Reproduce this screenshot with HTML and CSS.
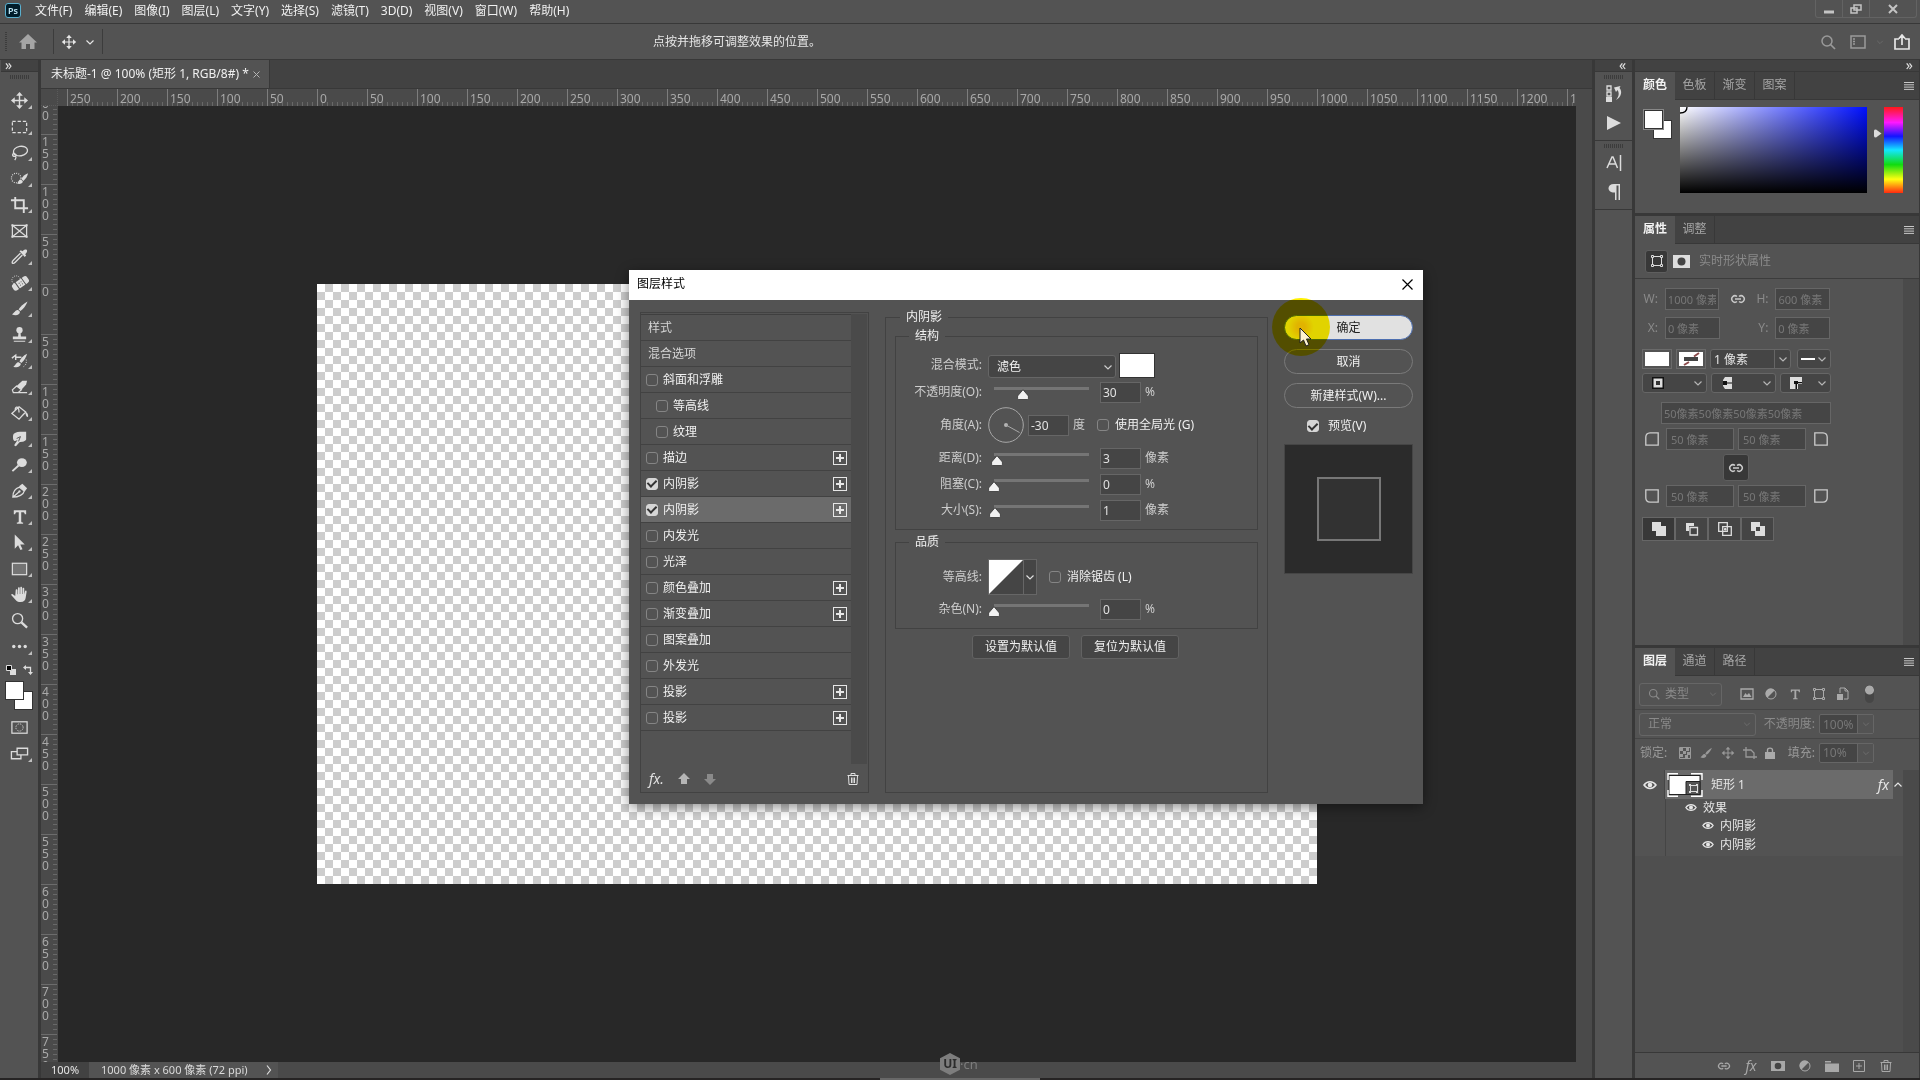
FILE: index.html
```html
<!DOCTYPE html>
<html lang="zh-CN">
<head>
<meta charset="utf-8">
<title>未标题-1 @ 100%</title>
<link rel="stylesheet" href="styles.css">
</head>
<body>
<svg class="sprite" aria-hidden="true">
  <symbol id="i-move" viewBox="0 0 20 20"><path d="M10 3v14M3 10h14" stroke="currentColor" stroke-width="1.5"/><path d="M10 1l3.500 4h-7zM10 19l3.500-4h-7zM1 10l4-3.500v7zM19 10l-4-3.500v7z" fill="currentColor"/></symbol>
  <symbol id="i-marquee" viewBox="0 0 20 20"><rect x="2.500" y="4.500" width="15" height="12" fill="none" stroke="currentColor" stroke-width="1.300" stroke-dasharray="3.500 2"/></symbol>
  <symbol id="i-lasso" viewBox="0 0 20 20"><ellipse cx="11" cy="8.500" rx="7.500" ry="5" transform="rotate(-10 11 8.500)" fill="none" stroke="currentColor" stroke-width="1.400"/><path d="M5 11c-3 0-3 3 0 3 2 0 2-2 0-2.500M6 14c1 2-.5 3-1 4" fill="none" stroke="currentColor" stroke-width="1.300"/></symbol>
  <symbol id="i-quick" viewBox="0 0 20 20"><circle cx="6.500" cy="9.500" r="5" fill="none" stroke="currentColor" stroke-width="1.300" stroke-dasharray="1 1.300"/><path d="M19 4.500c-3 1-6 3.500-7 6l2 2c2.500-2 4.500-5 5-8z" fill="currentColor"/><path d="M11.500 11c-2 0-2.500 2-4 4.500 3 .5 6 0 6-2.500z" fill="currentColor"/></symbol>
  <symbol id="i-crop" viewBox="0 0 20 20"><path d="M5.500 2v12H19M1 5.500h13.500V19" fill="none" stroke="currentColor" stroke-width="2"/></symbol>
  <symbol id="i-frame" viewBox="0 0 20 20"><path d="M2.500 4.500h15v12h-15zM2.500 4.500l15 12M17.500 4.500l-15 12" fill="none" stroke="currentColor" stroke-width="1.300"/><path d="M1.500 3.500h2v2h-2zM16.500 3.500h2v2h-2zM1.500 15.500h2v2h-2zM16.500 15.500h2v2h-2z" fill="currentColor"/></symbol>
  <symbol id="i-dropper" viewBox="0 0 20 20"><path d="M11 6.500L3.500 14c-1 1-1.500 2-1 3 1 .5 2 0 3-1L13 8.500" fill="none" stroke="currentColor" stroke-width="1.400"/><path d="M10 4.500l1.500-1 1.500 1c2-2 3.500-2.500 4.500-1.500s.5 2.500-1.500 4.500l1 1.500-1.500 1.500z" fill="currentColor"/></symbol>
  <symbol id="i-heal" viewBox="0 0 20 20"><circle cx="6.500" cy="7.500" r="4.500" fill="none" stroke="currentColor" stroke-dasharray="1 1.300"/><g transform="rotate(-35 11 11)"><rect x="1.500" y="7" width="19" height="8" rx="3" fill="currentColor"/><path d="M7 6.500v9M15 6.500v9" stroke="#535353"/><path d="M9.500 9.500h1v1h-1zM12 9.500h1v1h-1zM9.500 12h1v1h-1zM12 12h1v1h-1z" fill="#535353"/></g></symbol>
  <symbol id="i-brush" viewBox="0 0 20 20"><path d="M18.500 2.500c-4 2-8 5.500-9.500 8.500l2 1.500c3-2 6-6 7.500-10z" fill="currentColor"/><path d="M8.500 11.500c-3-.5-3.500 3-6.500 4.500 3.500 2 8.500 1 8.500-2.500z" fill="currentColor"/></symbol>
  <symbol id="i-stamp" viewBox="0 0 20 20"><circle cx="10" cy="5.500" r="3.300" fill="currentColor"/><path d="M9 8h2l.5 4H17v3H3v-3h5.500zM4 16.500h12v1.200H4z" fill="currentColor"/></symbol>
  <symbol id="i-histbrush" viewBox="0 0 20 20"><path d="M2 7.500l4-3v2h6M6 6.500v3" fill="none" stroke="currentColor" stroke-width="1.500"/><path d="M18 3c-4 2-7 5-8 8l2 1.500c3-2 5-6 6-9.500zM9.500 12c-3-.5-3 2.500-6 4.500 3.500 1.500 7.500.5 8-3z" fill="currentColor"/><path d="M17 9c1 4-1 7-4 8" fill="none" stroke="currentColor" stroke-dasharray="1 1.500"/></symbol>
  <symbol id="i-eraser" viewBox="0 0 20 20"><path d="M7 9.500L13 4h5l-1 4-5 5.500z" fill="currentColor"/><path d="M7 9.500l-4.500 4 1 3h5l3.500-3zM9 16.500h9" fill="none" stroke="currentColor" stroke-width="1.300"/></symbol>
  <symbol id="i-bucket" viewBox="0 0 20 20"><path d="M9.500 4l7 5.500-7 7.500L2 11zM5.500 7c0-4 4-4 4 3" fill="none" stroke="currentColor" stroke-width="1.400"/><path d="M16 9c2 1 3.500 3 3 5.500-1.500 1-2.500-1-3-5.500z" fill="currentColor"/></symbol>
  <symbol id="i-smudge" viewBox="0 0 20 20"><path d="M4 5c3-2.500 8-2 13-2v8c-2 3-5 2-7 3l-3.500 4c-1.500.5-2.500-1-1.500-2l3-4.500-2.500 1C3 13.500 2.500 7 4 5z" fill="currentColor"/><path d="M7 10l4-2-2 5" fill="none" stroke="#535353"/></symbol>
  <symbol id="i-dodge" viewBox="0 0 20 20"><ellipse cx="12.500" cy="8" rx="5.200" ry="4.700" fill="currentColor"/><path d="M9 11l-6.500 6" stroke="currentColor" stroke-width="2"/></symbol>
  <symbol id="i-pen" viewBox="0 0 20 20"><path d="M3 17c0-5 2-9 7-10.500l5 4C14.500 14 9 17 3 17zl7-6" fill="none" stroke="currentColor" stroke-width="1.400"/><circle cx="10" cy="11" r="1.200" fill="currentColor"/><path d="M9.500 5.500L13 3l5 4.500-2.500 3.500z" fill="currentColor"/></symbol>
  <symbol id="i-type" viewBox="0 0 20 20"><path d="M4 3.500h13v4h-1.500c-.2-1.500-.8-2-2-2h-1.700v9.500c0 1 .5 1.300 2 1.300v1.200H7.200v-1.200c1.500 0 2-.3 2-1.300V5.500H7.500c-1.200 0-1.800.5-2 2H4z" fill="currentColor"/></symbol>
  <symbol id="i-arrow" viewBox="0 0 20 20"><path d="M5 1.500v15l3.500-3.500 2.500 5 2.200-1-2.400-5H15.500z" fill="currentColor"/></symbol>
  <symbol id="i-rect" viewBox="0 0 20 20"><rect x="2.500" y="4.500" width="15" height="12" fill="#747474" stroke="currentColor" stroke-width="1.300"/></symbol>
  <symbol id="i-hand" viewBox="0 0 20 20"><path d="M5.500 11.500L2.500 9.500C1.500 9 .8 10 1.700 11l5 5.500c1 1 2 1.500 4.500 1.500 3.500 0 5-2 5.300-4.500L17.500 7c0-1.500-1.500-1.500-1.800-.2L15 10V4c0-1.500-1.800-1.500-1.800 0v5.500h-.5V3c0-1.500-1.900-1.500-1.900 0v6.500h-.5V3.500c0-1.500-1.900-1.500-1.900 0v6.300h-.5V5.500c0-1.500-1.900-1.500-1.900 0z" fill="currentColor"/></symbol>
  <symbol id="i-zoom" viewBox="0 0 20 20"><circle cx="8" cy="8" r="5.300" fill="none" stroke="currentColor" stroke-width="1.400"/><path d="M12 12l6 5.500" stroke="currentColor" stroke-width="2.500"/></symbol>
  <symbol id="i-dots" viewBox="0 0 20 20"><g fill="currentColor"><circle cx="4" cy="10" r="1.800"/><circle cx="10" cy="10" r="1.800"/><circle cx="16" cy="10" r="1.800"/></g></symbol>
  <symbol id="i-mask" viewBox="0 0 20 20"><rect x="2" y="4" width="16" height="12" fill="none" stroke="currentColor" stroke-width="1.300"/><circle cx="10" cy="10" r="3.800" fill="none" stroke="currentColor" stroke-dasharray="1 1"/></symbol>
  <symbol id="i-screen" viewBox="0 0 20 20"><path d="M7.500 4.500h11v7h-11zM7.500 8h-6v7.500h10v-4" fill="none" stroke="currentColor" stroke-width="1.400"/></symbol>
  <symbol id="i-chev" viewBox="0 0 10 10"><path d="M1.500 3.500L5 7l3.500-3.500" fill="none" stroke="currentColor" stroke-width="1.200"/></symbol>
  <symbol id="i-link" viewBox="0 0 16 12"><path d="M7 3.500A3.200 3.200 0 1 0 7 8.500M9 3.500a3.200 3.200 0 1 1 0 5M5 6h6" fill="none" stroke="currentColor" stroke-width="1.500"/></symbol>
  <symbol id="i-search" viewBox="0 0 16 16"><circle cx="7" cy="7" r="5" fill="none" stroke="currentColor" stroke-width="1.500"/><path d="M10.500 10.500L15 15" stroke="currentColor" stroke-width="1.700"/></symbol>
  <symbol id="i-shape" viewBox="0 0 14 14"><path d="M4 2.500h6M4 11.500h6M2.500 4v6M11.500 4v6" stroke="currentColor"/><path d="M1.500 1.500h2v2h-2zM10.500 1.500h2v2h-2zM1.500 10.500h2v2h-2zM10.500 10.500h2v2h-2z" fill="none" stroke="currentColor"/></symbol>
  <symbol id="i-trash" viewBox="0 0 14 14"><path d="M1.500 3.500h11M5 3V1.500h4V3M2.500 4l.5 8.500h8l.5-8.500M5.500 5.500v5.500M7 5.500v5.500M8.500 5.500v5.500" fill="none" stroke="currentColor"/></symbol>
  <symbol id="i-eye" viewBox="0 0 14 10"><path d="M1 5c3-4.500 9-4.500 12 0-3 4.500-9 4.500-12 0z" fill="none" stroke="currentColor" stroke-width="1.500"/><circle cx="7" cy="5" r="2.300" fill="currentColor"/></symbol>
  <symbol id="i-adjust" viewBox="0 0 14 14"><circle cx="7" cy="7" r="5" fill="none" stroke="currentColor"/><path d="M10.500 3.500A5 5 0 1 0 3.500 10.500z" fill="currentColor"/></symbol>
  <symbol id="i-corner" viewBox="0 0 14 14"><path d="M.8 13.200V5Q1 1 5 .8h8.200v12.400z" fill="none" stroke="currentColor" stroke-width="1.300"/></symbol>
  <symbol id="i-menu" viewBox="0 0 10 8"><path d="M0 .5h10M0 2.800h10M0 5.100h10M0 7.400h10" stroke="currentColor"/></symbol>
</svg>

<div class="app">
  <header class="menubar">
    <span class="ps">Ps</span>
    <nav class="menus">
      <a href="#">文件(F)</a><a href="#">编辑(E)</a><a href="#">图像(I)</a><a href="#">图层(L)</a><a href="#">文字(Y)</a><a href="#">选择(S)</a><a href="#">滤镜(T)</a><a href="#">3D(D)</a><a href="#">视图(V)</a><a href="#">窗口(W)</a><a href="#">帮助(H)</a>
    </nav>
    <div class="winctl">
      <button aria-label="最小化"><svg width="10" height="10"><path d="M0 8h10" stroke="currentColor" stroke-width="3"/></svg></button>
      <button aria-label="还原"><svg width="12" height="10"><path d="M4 1h7v5H4zM1 4h6v5H1z" fill="none" stroke="currentColor" stroke-width="1.500"/></svg></button>
      <button class="wide" aria-label="关闭"><svg width="10" height="10"><path d="M1 1l8 8M9 1l-8 8" stroke="currentColor" stroke-width="2"/></svg></button>
    </div>
  </header>

  <div class="options">
    <span class="vgrip"></span>
    <button class="home" aria-label="主页"><svg width="18" height="16"><path d="M9 0L0 8.500h2.500V15H7v-5h4v5h4.500V8.500H18z" fill="#a5a5a5"/></svg></button>
    <button class="current" aria-label="移动工具"><svg width="16" height="16"><use href="#i-move"/></svg><svg width="10" height="10"><use href="#i-chev"/></svg></button>
    <p class="hint">点按并拖移可调整效果的位置。</p>
    <div class="opt-right">
      <button class="dim find" aria-label="搜索"><svg width="16" height="16"><use href="#i-search"/></svg></button>
      <button class="dim" aria-label="工作区"><svg width="16" height="14"><path d="M1 1h14v12H1z" fill="none" stroke="currentColor" stroke-width="1.500"/><path d="M3 4h2M3 6.500h2M3 9h2" stroke="currentColor" stroke-width="1.500"/></svg></button>
      <button class="faint" aria-label="工作区列表"><svg width="8" height="8"><use href="#i-chev"/></svg></button>
      <button aria-label="共享"><svg width="16" height="16"><path d="M5 5H1v10h14V5h-4M8 11V2M5 4.500L8 1l3 3.500" fill="none" stroke="currentColor" stroke-width="1.700"/></svg></button>
    </div>
  </div>

  <main class="work">
    <aside class="tools">
      <div class="fold fold-left">»</div>
      <div class="hgrip"></div>
      <div class="toollist">
        <button class="tool" aria-label="移动"><svg><use href="#i-move"/></svg></button>
        <button class="tool" aria-label="选框"><svg><use href="#i-marquee"/></svg></button>
        <button class="tool" aria-label="套索"><svg><use href="#i-lasso"/></svg></button>
        <button class="tool" aria-label="快速选择"><svg><use href="#i-quick"/></svg></button>
        <button class="tool" aria-label="裁剪"><svg><use href="#i-crop"/></svg></button>
        <button class="tool flat" aria-label="图框"><svg><use href="#i-frame"/></svg></button>
        <button class="tool" aria-label="吸管"><svg><use href="#i-dropper"/></svg></button>
        <button class="tool" aria-label="修复画笔"><svg><use href="#i-heal"/></svg></button>
        <button class="tool" aria-label="画笔"><svg><use href="#i-brush"/></svg></button>
        <button class="tool" aria-label="图章"><svg><use href="#i-stamp"/></svg></button>
        <button class="tool" aria-label="历史画笔"><svg><use href="#i-histbrush"/></svg></button>
        <button class="tool" aria-label="橡皮擦"><svg><use href="#i-eraser"/></svg></button>
        <button class="tool" aria-label="油漆桶"><svg><use href="#i-bucket"/></svg></button>
        <button class="tool" aria-label="涂抹"><svg><use href="#i-smudge"/></svg></button>
        <button class="tool" aria-label="减淡"><svg><use href="#i-dodge"/></svg></button>
        <button class="tool" aria-label="钢笔"><svg><use href="#i-pen"/></svg></button>
        <button class="tool" aria-label="文字"><svg><use href="#i-type"/></svg></button>
        <button class="tool" aria-label="路径选择"><svg><use href="#i-arrow"/></svg></button>
        <button class="tool" aria-label="矩形"><svg><use href="#i-rect"/></svg></button>
        <button class="tool" aria-label="抓手"><svg><use href="#i-hand"/></svg></button>
        <button class="tool flat" aria-label="缩放"><svg><use href="#i-zoom"/></svg></button>
        <button class="tool" aria-label="更多"><svg><use href="#i-dots"/></svg></button>
      </div>
      <div class="mini">
        <svg width="10" height="10"><path d="M4 4h6v6H4z" fill="#ddd"/><path d="M.5.500h5v5h-5z" fill="#000" stroke="#ddd"/></svg>
        <svg width="10" height="10"><path d="M2 2.500h5.500V8" fill="none" stroke="#ddd" stroke-width="1.300"/><path d="M0 2.500L3 0v5zM7.500 10L5 7h5z" fill="#ddd"/></svg>
      </div>
      <div class="swatches"><i class="sw back"></i><i class="sw front"></i></div>
      <button class="tool flat" aria-label="快速蒙版"><svg><use href="#i-mask"/></svg></button>
      <button class="tool" aria-label="屏幕模式"><svg><use href="#i-screen"/></svg></button>
    </aside>

    <section class="doc">
      <div class="tabs">
        <div class="doctab"><span>未标题-1 @ 100% (矩形 1, RGB/8#) *</span><button aria-label="关闭文档"><svg width="7" height="7"><path d="M.5.500l6 6M6.500.500l-6 6" stroke="#b5b5b5"/></svg></button></div>
      </div>
      <div class="view">
        <div class="corner"></div>
        <div class="hruler"><span>250</span><span>200</span><span>150</span><span>100</span><span>50</span><span>0</span><span>50</span><span>100</span><span>150</span><span>200</span><span>250</span><span>300</span><span>350</span><span>400</span><span>450</span><span>500</span><span>550</span><span>600</span><span>650</span><span>700</span><span>750</span><span>800</span><span>850</span><span>900</span><span>950</span><span>1000</span><span>1050</span><span>1100</span><span>1150</span><span>1200</span><span>1250</span></div>
        <div class="vscroll"></div>
        <div class="vruler"><span>200</span><span>150</span><span>100</span><span>50</span><span>0</span><span>50</span><span>100</span><span>150</span><span>200</span><span>250</span><span>300</span><span>350</span><span>400</span><span>450</span><span>500</span><span>550</span><span>600</span><span>650</span><span>700</span><span>750</span></div>
        <div class="stage"><div class="artboard"></div></div>
      </div>
      <footer class="status"><span class="zoomval">100%</span><span class="info"><span>1000 像素 x 600 像素 (72 ppi)</span><svg width="6" height="10"><path d="M1 .5l3.500 4.500L1 9.500" fill="none" stroke="#ddd" stroke-width="1.200"/></svg></span></footer>
      <div class="watermark"><span class="hex">UI</span><span>·cn</span></div>
    </section>

    <aside class="strip">
      <div class="fold">«</div>
      <div class="stripgroup">
        <div class="hgrip"></div>
        <button aria-label="历史记录"><svg width="16" height="18"><path d="M1 1h4v4H1zM1 7h4v4H1z" fill="none" stroke="currentColor" stroke-width="1.300"/><path d="M0 12h6v5H0z" fill="currentColor"/><path d="M8 2.500L14.500 1 13.500 3C17 7 14.500 13 10 15c3-3.500 3.500-7 1.500-10L10 7z" fill="currentColor"/></svg></button>
        <button aria-label="动作"><svg width="14" height="14"><path d="M0 0l14 7-14 7z" fill="currentColor"/></svg></button>
      </div>
      <div class="stripgroup">
        <div class="hgrip"></div>
        <button aria-label="字符"><svg width="16" height="18"><path d="M1 14L6 3h1l4.500 11M3 10h6.500M14.500 1v16" fill="none" stroke="currentColor" stroke-width="1.500"/></svg></button>
        <button aria-label="段落"><svg width="12" height="16"><path d="M6 0h6v16h-1.500V1.500H8.500V16H7V8.500C-1.500 9-1.500 0 6 0z" fill="currentColor"/></svg></button>
      </div>
    </aside>

    <aside class="panels">
      <div class="fold fold-right">»</div>
      <section class="panel">
        <div class="ptabs"><button class="on">颜色</button><button>色板</button><button>渐变</button><button>图案</button><svg class="burger" width="10" height="8"><use href="#i-menu"/></svg></div>
        <div class="colorbody">
          <div class="swatches big"><i class="sw back"></i><i class="sw front"></i></div>
          <div class="field"><svg width="8" height="8"><path d="M7 0c0 4-3 6-7 6" fill="none" stroke="#000" stroke-width="1.300"/></svg></div>
          <svg class="pointer" width="8" height="9"><path d="M0 1.500Q0 .5 2 .5L7.500 4.500 2 8.500Q0 8.500 0 7z" fill="#ddd"/></svg>
          <div class="hue"></div>
        </div>
      </section>
      <section class="panel props">
        <div class="ptabs"><button class="on">属性</button><button>调整</button><svg class="burger" width="10" height="8"><use href="#i-menu"/></svg></div>
        <div class="propshead"><span class="boxicon"><svg width="14" height="14"><use href="#i-shape"/></svg></span><svg width="17" height="13"><path d="M0 0h17v13H0z" fill="#ddd"/><circle cx="8.500" cy="6.500" r="4" fill="#444"/></svg><span>实时形状属性</span></div>
        <div class="propsbody">
          <div class="propform">
            <div class="prow size"><label for="pw">W:</label><input id="pw" value="1000 像素" disabled><svg class="lk" width="16" height="12"><use href="#i-link"/></svg><label for="ph">H:</label><input id="ph" value="600 像素" disabled></div>
            <div class="prow size"><label for="px">X:</label><input id="px" value="0 像素" disabled><span class="lk"></span><label for="py">Y:</label><input id="py" value="0 像素" disabled></div>
            <div class="prow strokes">
              <button class="fillbtn" aria-label="填充"><i></i></button>
              <button class="fillbtn" aria-label="描边"><i><svg width="24" height="14"><path d="M5 5h14v4H5z" fill="#444"/><path d="M15 4.500L20 1M5 13l5-3" stroke="#8b4a4a" stroke-width="2"/></svg></i></button>
              <span class="combo w81"><input aria-label="描边宽度" value="1 像素"><button aria-label="宽度列表"><svg width="10" height="10"><use href="#i-chev"/></svg></button></span>
              <button class="drop w34" aria-label="线型"><svg width="14" height="10"><path d="M0 5h14" stroke="#fff" stroke-width="2"/></svg><svg width="10" height="10"><use href="#i-chev"/></svg></button>
            </div>
            <div class="prow aligns">
              <button class="drop w64" aria-label="对齐"><svg width="14" height="14"><path d="M1 1h12v12H1z" fill="#111"/><path d="M2.500 2.500h9v9h-9z" fill="#ddd"/><path d="M5 5h4v4H5z" fill="#333"/></svg><svg width="10" height="10"><use href="#i-chev"/></svg></button>
              <button class="drop w64" aria-label="端点"><svg width="14" height="14"><path d="M5 1h7v12H5L3 10V4z" fill="#ddd"/><path d="M3 5h4v4H3zM6 6.500h6v1H6z" fill="#111"/></svg><svg width="10" height="10"><use href="#i-chev"/></svg></button>
              <button class="drop w51" aria-label="角点"><svg width="14" height="14"><path d="M1 1h12v7H9v5H1z" fill="#ddd"/><path d="M5 5h4v3H5zM6.500 8h1.500v5H6.500zM8 6h5v1.200H8z" fill="#111"/></svg><svg width="10" height="10"><use href="#i-chev"/></svg></button>
            </div>
            <div class="prow radiiall"><input aria-label="圆角" value="50像素50像素50像素50像素" disabled></div>
            <div class="prow radii"><svg width="14" height="14"><use href="#i-corner"/></svg><input aria-label="左上" value="50 像素" disabled><input aria-label="右上" value="50 像素" disabled><svg class="tr" width="14" height="14"><use href="#i-corner"/></svg></div>
            <div class="prow linkrow"><button class="linkbtn" aria-label="链接圆角"><svg width="16" height="12"><use href="#i-link"/></svg></button></div>
            <div class="prow radii"><svg class="bl" width="14" height="14"><use href="#i-corner"/></svg><input aria-label="左下" value="50 像素" disabled><input aria-label="右下" value="50 像素" disabled><svg class="br" width="14" height="14"><use href="#i-corner"/></svg></div>
            <div class="prow ops">
              <button class="on" aria-label="合并"><svg width="14" height="14"><path d="M0 0h9v4h5v10H4V9H0z" fill="#ddd"/></svg></button>
              <button aria-label="减去"><svg width="14" height="14"><path d="M1 1h8v3H4v5H1z" fill="#ddd"/><path d="M5 5.500h7.500V13H5z" fill="none" stroke="#ddd" stroke-width="1.300"/></svg></button>
              <button aria-label="相交"><svg width="14" height="14"><path d="M.7.700h8.600v8.600H.7zM4.700 4.700h8.600v8.600H4.700z" fill="none" stroke="#ddd" stroke-width="1.300"/><path d="M6.500 6.500h1.500v1.500H6.500z" fill="#ddd" stroke="#ddd"/></svg></button>
              <button aria-label="排除"><svg width="14" height="14"><path d="M0 0h9v4h5v10H4V9H0z" fill="#ddd"/><path d="M5 5h4v4H5z" fill="#444"/></svg></button>
            </div>
          </div>
          <div class="track"></div>
        </div>
      </section>
      <section class="panel layers">
        <div class="ptabs"><button class="on">图层</button><button>通道</button><button>路径</button><svg class="burger" width="10" height="8"><use href="#i-menu"/></svg></div>
        <div class="lrow filter">
          <button class="ldrop kind"><svg width="12" height="12"><use href="#i-search"/></svg><span>类型</span><svg class="end" width="8" height="8"><use href="#i-chev"/></svg></button>
          <svg width="14" height="12"><path d="M1 1h12v10H1z" fill="none" stroke="currentColor" stroke-width="1.300"/><path d="M3 9l2.500-4L7 7l2-2 2.500 4z" fill="currentColor"/></svg>
          <svg width="14" height="14"><use href="#i-adjust"/></svg>
          <svg width="14" height="14"><use href="#i-type"/></svg>
          <svg width="14" height="14"><use href="#i-shape"/></svg>
          <svg width="14" height="14"><path d="M4 6V1h5l3 3v8H8M9 1v3h3" fill="none" stroke="currentColor"/><path d="M1 7h6v6H1z" fill="currentColor"/></svg>
          <i class="toggle"></i>
        </div>
        <div class="lrow">
          <button class="ldrop mode"><span>正常</span><svg class="end" width="8" height="8"><use href="#i-chev"/></svg></button>
          <label class="push" for="lop">不透明度:</label>
          <span class="combo off"><input id="lop" value="100%" disabled><button aria-label="不透明度列表"><svg width="8" height="8"><use href="#i-chev"/></svg></button></span>
        </div>
        <div class="lrow locks">
          <span>锁定:</span>
          <svg width="12" height="12"><path d="M.5.500h11v11H.5z" fill="none" stroke="#999"/><path d="M1 1h3v3H1zM7 1h3v3H7zM4 4h3v3H4zM8 5h3v3H8zM1 7h3v3H1zM6 8h3v3H6z" fill="#999"/></svg>
          <svg width="14" height="14"><use href="#i-brush"/></svg>
          <svg width="14" height="14"><use href="#i-move"/></svg>
          <svg width="14" height="12"><path d="M3 0v10h11M0 3h8l3 3v6" fill="none" stroke="#999" stroke-width="1.300"/></svg>
          <svg width="10" height="12"><path d="M0 5h10v7H0z" fill="#aaa"/><path d="M2.500 5V3c0-2.500 5-2.500 5 0v2" fill="none" stroke="#aaa" stroke-width="1.400"/></svg>
          <label class="push" for="lfi">填充:</label>
          <span class="combo off"><input id="lfi" value="10%" disabled><button aria-label="填充列表"><svg width="8" height="8"><use href="#i-chev"/></svg></button></span>
        </div>
        <div class="layerarea">
          <div class="layerlist">
            <div class="layer">
              <span class="eyecol"><svg width="14" height="10"><use href="#i-eye"/></svg></span>
              <div class="layersel">
                <svg width="36" height="24"><path d="M2 2.500h31v19H2z" fill="#fff" stroke="#222"/><path d="M19 8.500h14v13H19z" fill="#555" stroke="#222"/><path d="M23.500 12.500h7v6h-7z" fill="none" stroke="#ddd"/><path d="M22 11h2v2h-2zM29 11h2v2h-2zM22 18h2v2h-2zM29 18h2v2h-2z" fill="#ddd"/><path d="M1 7V.7h10M24 .7h11V7M1 17v6.300h10M24 23.300h11V17" fill="none" stroke="#fff" stroke-width="1.400"/></svg>
                <span class="lname">矩形 1</span><span class="fx">fx</span>
              </div>
              <svg class="caret" width="10" height="10"><use href="#i-chev"/></svg>
            </div>
            <div class="effects">
              <div class="eff"><svg width="12" height="9"><use href="#i-eye"/></svg>效果</div>
              <div class="eff sub"><svg width="12" height="9"><use href="#i-eye"/></svg>内阴影</div>
              <div class="eff sub"><svg width="12" height="9"><use href="#i-eye"/></svg>内阴影</div>
            </div>
          </div>
          <div class="track"></div>
        </div>
        <div class="lfoot">
          <button aria-label="链接图层"><svg width="14" height="12"><use href="#i-link"/></svg></button>
          <button class="fx" aria-label="图层样式">fx</button>
          <button aria-label="添加蒙版"><svg width="14" height="12"><path d="M0 1h14v10H0z" fill="currentColor"/><circle cx="7" cy="6" r="3.300" fill="#444"/></svg></button>
          <button aria-label="调整图层"><svg width="14" height="14"><use href="#i-adjust"/></svg></button>
          <button aria-label="新建组"><svg width="14" height="12"><path d="M0 1h6v1.500H0zM0 3.500h14V12H0z" fill="currentColor"/></svg></button>
          <button aria-label="新建图层"><svg width="12" height="12"><path d="M.5.500h11v11H.5zM6 3v6M3 6h6" fill="none" stroke="currentColor"/></svg></button>
          <button aria-label="删除图层"><svg width="14" height="14"><use href="#i-trash"/></svg></button>
        </div>
      </section>
    </aside>
  </main>
  <div class="edge"><i></i></div>
</div>

<div class="dialog" role="dialog" aria-labelledby="dt">
  <div class="dtitle"><h1 id="dt">图层样式</h1><button aria-label="关闭"><svg width="11" height="11"><path d="M.5.500l10 10M10.500.500l-10 10" stroke="#000" stroke-width="1.200"/></svg></button></div>
  <div class="dbody">
    <div class="styles">
      <div class="stylescroll">
        <div class="stylelist">
          <div class="st head">样式</div>
          <div class="st head">混合选项</div>
          <div class="st"><label><input type="checkbox">斜面和浮雕</label></div>
          <div class="st indent"><label><input type="checkbox">等高线</label></div>
          <div class="st indent"><label><input type="checkbox">纹理</label></div>
          <div class="st"><label><input type="checkbox">描边</label><button class="plus" aria-label="添加描边"></button></div>
          <div class="st"><label><input type="checkbox" checked>内阴影</label><button class="plus" aria-label="添加内阴影"></button></div>
          <div class="st sel"><label><input type="checkbox" checked>内阴影</label><button class="plus" aria-label="添加内阴影"></button></div>
          <div class="st"><label><input type="checkbox">内发光</label></div>
          <div class="st"><label><input type="checkbox">光泽</label></div>
          <div class="st"><label><input type="checkbox">颜色叠加</label><button class="plus" aria-label="添加颜色叠加"></button></div>
          <div class="st"><label><input type="checkbox">渐变叠加</label><button class="plus" aria-label="添加渐变叠加"></button></div>
          <div class="st"><label><input type="checkbox">图案叠加</label></div>
          <div class="st"><label><input type="checkbox">外发光</label></div>
          <div class="st"><label><input type="checkbox">投影</label><button class="plus" aria-label="添加投影"></button></div>
          <div class="st"><label><input type="checkbox">投影</label><button class="plus" aria-label="添加投影"></button></div>
        </div>
        <div class="track"></div>
      </div>
      <div class="stylefoot">
        <button class="fx" aria-label="效果菜单">fx.</button>
        <button aria-label="上移"><svg width="12" height="12"><path d="M6 0l6 6H9v5H3V6H0z" fill="#b5b5b5"/></svg></button>
        <button aria-label="下移"><svg width="12" height="12"><path d="M6 12L0 6h3V1h6v5h3z" fill="#8a8a8a"/></svg></button>
        <button class="end" aria-label="删除"><svg width="14" height="14"><use href="#i-trash"/></svg></button>
      </div>
    </div>

    <fieldset class="main">
      <legend>内阴影</legend>
      <fieldset class="inner structure">
        <legend>结构</legend>
        <div class="row first"><label for="bm">混合模式:</label><span class="selwrap"><select id="bm"><option>滤色</option></select><svg width="10" height="10"><use href="#i-chev"/></svg></span><button class="colorchip" aria-label="阴影颜色"></button></div>
        <div class="row"><label for="op">不透明度(O):</label><input type="range" value="30" aria-label="不透明度"><input type="text" id="op" value="30"><span>%</span></div>
        <div class="row angle"><label for="an">角度(A):</label><svg width="36" height="36"><circle cx="18" cy="18" r="17.300" fill="none" stroke="#a8a8a8"/><circle cx="18" cy="18" r="2" fill="#b5b5b5"/><path d="M18 18l13.500 7.500" stroke="#a8a8a8"/></svg><input type="text" id="an" value="-30"><span>度</span><label class="check"><input type="checkbox">使用全局光 (G)</label></div>
        <div class="row"><label for="di">距离(D):</label><input type="range" value="3" aria-label="距离"><input type="text" id="di" value="3"><span>像素</span></div>
        <div class="row"><label for="ch">阻塞(C):</label><input type="range" value="0" aria-label="阻塞"><input type="text" id="ch" value="0"><span>%</span></div>
        <div class="row"><label for="si">大小(S):</label><input type="range" value="1" aria-label="大小"><input type="text" id="si" value="1"><span>像素</span></div>
      </fieldset>
      <fieldset class="inner quality">
        <legend>品质</legend>
        <div class="row contour"><label for="ct">等高线:</label><button class="curve" id="ct"><svg width="34" height="34"><path d="M0 0h34L0 34z" fill="#fff"/></svg><span><svg width="10" height="10"><use href="#i-chev"/></svg></span></button><label class="check"><input type="checkbox">消除锯齿 (L)</label></div>
        <div class="row"><label for="no">杂色(N):</label><input type="range" value="0" aria-label="杂色"><input type="text" id="no" value="0"><span>%</span></div>
      </fieldset>
      <div class="defaults"><button>设置为默认值</button><button>复位为默认值</button></div>
    </fieldset>

    <div class="actions">
      <button class="pill ok">确定</button>
      <button class="pill">取消</button>
      <button class="pill">新建样式(W)...</button>
      <label class="preview"><input type="checkbox" checked>预览(V)</label>
      <div class="thumb"><i></i></div>
    </div>
  </div>
  <div class="halo"></div>
  <svg class="cursor" width="14" height="20"><path d="M1 1v15l3.500-3 2.500 6 3-1.300L7.500 12H12z" fill="#fff3d0" stroke="#222"/></svg>
</div>
</body>
</html>
```
FILE: styles.css
```css
* { box-sizing: border-box; }
html, body { height: 100%; }
body {
  margin: 0;
  background: #535353;
  color: #e6e6e6;
  font: 12px/16px "Noto Sans", "Noto Sans CJK SC", sans-serif;
  overflow: hidden;
}
button, input, select { font: inherit; color: inherit; margin: 0; }
button { background: none; border: 0; padding: 0; display: inline-flex; align-items: center; justify-content: center; }
svg { display: block; flex: none; }
a { color: inherit; text-decoration: none; }
i { display: block; }
.sprite { position: absolute; width: 0; height: 0; }

.app { display: flex; flex-direction: column; height: 100vh; min-width: 1200px; }

/* menu bar */
.menubar { display: flex; height: 24px; border-bottom: 1px solid #383838; align-items: flex-start; flex: none; }
.ps { width: 16px; height: 15px; margin: 3px 14px 0 5px; border: 1px solid #5bb0cf; border-radius: 3px; background: #001d2b; color: #bfe6f5; font-size: 9px; line-height: 13px; font-weight: 600; text-align: center; }
.menus { display: flex; gap: 12px; line-height: 20px; padding-top: 1px; color: #f0f0f0; }
.winctl { display: flex; margin-left: auto; margin-right: 3px; height: 18px; border: 1px solid #636363; border-top: 0; border-radius: 0 0 3px 3px; color: #c4c4c4; }
.winctl button { width: 27px; border-right: 1px solid #636363; }
.winctl .wide { width: 46px; border-right: 0; }

/* options bar */
.options { display: flex; align-items: center; height: 36px; border-bottom: 1px solid #383838; padding: 0 10px 0 5px; flex: none; }
.vgrip { width: 2px; height: 20px; background: repeating-linear-gradient(#3c3c3c 0 1px, transparent 1px 2px); }
.home { width: 47px; height: 25px; border-right: 1px solid #3c3c3c; padding-right: 4px; }
.current { width: 49px; height: 25px; border-right: 1px solid #3c3c3c; gap: 8px; }
.hint { margin: 0 0 0 550px; }
.opt-right { display: flex; align-items: center; margin-left: auto; gap: 10px; }
.dim { color: #9a9a9a; }
.find { margin-right: 4px; }
.faint { color: #6a6a6a; }

/* work area */
.work { display: flex; flex: 1; min-height: 0; background: #383838; gap: 3px; }
.fold { height: 12px; background: #424242; border-bottom: 1px solid #383838; font-size: 14px; line-height: 9px; color: #e0e0e0; text-align: center; padding: 0 6px; flex: none; }
.strip .fold { padding-left: 24px; }
.fold-left { text-align: left; padding-left: 4px; }
.fold-right { text-align: right; }
.hgrip { width: 20px; height: 4px; margin: 3px auto 0; background: repeating-linear-gradient(90deg, #3c3c3c 0 1px, transparent 1px 2px); }

.tools { width: 38px; padding-left: 1px; background: #535353; flex: none; display: flex; flex-direction: column; align-items: center; color: #dcdcdc; }
.tools .fold { align-self: stretch; }
.toollist { display: flex; flex-direction: column; margin-top: 8px; }
.tool { position: relative; width: 37px; height: 26px; }
.tool svg { width: 19px; height: 19px; }
.tool::after { content: ""; position: absolute; right: 6px; bottom: 4px; border: 2px solid; border-color: transparent #c0c0c0 #c0c0c0 transparent; }
.tool.flat::after { display: none; }
.mini { display: flex; justify-content: space-between; width: 27px; margin: 6px 0; }
.swatches { position: relative; width: 28px; height: 29px; margin: 0 0 4px; flex: none; }
.tools .swatches { margin-right: 2px; }
.sw { position: absolute; width: 19px; height: 19px; background: #fff; border: 1px solid #333; }
.sw.front { left: 0; top: 0; }
.sw.back { right: 0; bottom: 0; }

.doc { position: relative; flex: 1; min-width: 0; display: flex; flex-direction: column; background: #424242; }
.tabs { height: 29px; border-bottom: 1px solid #383838; display: flex; flex: none; }
.doctab { background: #535353; display: flex; align-items: center; gap: 4px; padding: 0 9px 0 10px; border-right: 1px solid #383838; color: #f0f0f0; }
.view { flex: 1; min-height: 0; display: grid; grid-template-columns: 17px minmax(0, 1fr) 16px; grid-template-rows: 17px minmax(0, 1fr); }
.corner { background: #4a4a4a; border: 1px dotted #5a5a5a; border-width: 0 1px 1px 0; }
.hruler, .vruler { display: flex; overflow: hidden; background: #4a4a4a; color: #a9a9a9; }
.hruler { padding-left: 9px; }
.hruler span { flex: 0 0 50px; padding-left: 2px; line-height: 19px; border-left: 1px solid #7d7d7d; background: repeating-linear-gradient(90deg, transparent 0 4px, #686868 4px 5px) 0 100% / 100% 4px no-repeat; }
.vruler { flex-direction: column; padding-right: 1px; justify-content: flex-start; }
.vruler span { flex: 0 0 50px; padding: 1px 8px 0 1px; line-height: 12px; overflow-wrap: anywhere; border-top: 1px solid #6c6c6c; background: repeating-linear-gradient(transparent 0 4px, #686868 4px 5px) 100% 0 / 4px 100% no-repeat; }
.vruler span:first-child { margin-top: -22px; }
.vscroll { grid-row: 1 / 3; grid-column: 3; background: #4a4a4a; }
.stage { position: relative; background: #282828; overflow: hidden; }
.artboard { position: absolute; left: 259px; top: 178px; width: 1000px; height: 600px; background: conic-gradient(#cdcdcd 25%, #fff 0 50%, #cdcdcd 0 75%, #fff 0) 0 0 / 16px 16px; }
.status { height: 16px; flex: none; display: flex; background: #4a4a4a; font-size: 11px; }
.zoomval { width: 48px; padding-left: 10px; background: #424242; }
.info { display: flex; gap: 18px; align-items: center; padding: 0 6px 0 12px; background: #535353; color: #dadada; }
.watermark { position: absolute; left: 899px; bottom: 3px; display: flex; align-items: center; color: #7d7d7d; font-size: 13px; }
.hex { width: 20px; height: 22px; background: #7d7d7d; color: #2c2c2c; font-size: 12px; font-weight: 700; line-height: 22px; text-align: center; clip-path: polygon(50% 0, 100% 24%, 100% 76%, 50% 100%, 0 76%, 0 24%); }

.strip { width: 37px; background: #535353; flex: none; color: #dcdcdc; }
.stripgroup { height: 69px; border-bottom: 1px solid #383838; display: flex; flex-direction: column; align-items: center; }
.stripgroup button { width: 37px; height: 29px; }

.panels { width: 285px; flex: none; display: flex; flex-direction: column; border-right: 1px solid #383838; }
.panel { background: #535353; margin-bottom: 3px; flex: none; }
.ptabs { display: flex; height: 28px; background: #424242; border-bottom: 1px solid #383838; align-items: stretch; flex: none; }
.ptabs button { width: 40px; color: #a5a5a5; border-right: 1px solid #383838; padding-bottom: 2px; }
.ptabs .on { background: #535353; color: #f2f2f2; font-weight: 600; height: 28px; border: 0; }
.burger { margin: 10px 5px 0 auto; color: #c8c8c8; }

.colorbody { display: flex; padding: 7px 16px 20px 9px; height: 113px; align-items: flex-start; }
.swatches.big { margin: 3px 8px 0 0; }
.big .front { outline: 1px solid #888; }
.field { flex: 1; height: 86px; background: linear-gradient(transparent, #000), linear-gradient(90deg, #fff, #0010ff); }
.pointer { margin: 22px 2px 0 7px; }
.hue { width: 19px; height: 86px; background: linear-gradient(#ff1818, #ff18ff 18%, #1414ff 34%, #14e6ff 50%, #10dc10 67%, #ffff10 84%, #ff2a10); }

.props { height: 429px; display: flex; flex-direction: column; }
.propshead { display: flex; align-items: center; height: 35px; padding: 0 10px; border-bottom: 1px solid #3c3c3c; gap: 5px; color: #8a8a8a; flex: none; }
.propshead span:last-child { padding-left: 4px; }
.boxicon { width: 23px; height: 23px; background: #383838; border: 1px solid #5e5e5e; border-radius: 3px; display: grid; place-items: center; color: #ddd; }
.propsbody { flex: 1; display: flex; }
.propform { flex: 1; padding: 9px 7px 0; }
.track { width: 16px; background: #4a4a4a; flex: none; }
.prow { display: flex; align-items: center; }
.prow input { min-width: 0; height: 22px; background: #454545; border: 1px solid #666; padding: 0 2px; font-size: 11px; }
.prow input:disabled { color: #777; }
.size { width: 188px; margin-bottom: 7px; }
.size label { width: 16px; text-align: right; color: #8a8a8a; }
.size input { width: 55px; margin-left: 7px; }
.size .lk { width: 16px; margin: 0 10px 0 11px; color: #c8c8c8; }
.size .lk + label { width: 12px; }
.strokes, .aligns { gap: 4px; height: 20px; margin: 4px 0; }
.strokes { margin-top: 10px; }
.fillbtn { width: 30px; height: 20px; border: 1px solid #6a6a6a; }
.fillbtn i { width: 24px; height: 14px; background: #fff; }
.combo { display: flex; height: 20px; border: 1px solid #666; border-radius: 3px; background: #454545; }
.combo input { flex: 1; min-width: 0; width: 100%; height: 18px; border: 0; background: none; padding: 0 3px; }
.combo button { width: 16px; border-left: 1px solid #666; color: #b5b5b5; flex: none; }
.prow .combo input { height: 18px; border: 0; font-size: 12px; background: none; }
.w81 { width: 81px; }
.drop { height: 20px; border: 1px solid #666; border-radius: 3px; background: #454545; justify-content: space-between; padding: 0 3px 0 8px; color: #b5b5b5; }
.drop.w34 { width: 34px; margin-left: 2px; padding-left: 3px; }
.w64 { width: 65px; }
.w51 { width: 51px; }
.radiiall { padding-left: 19px; margin-top: 9px; }
.radiiall input { width: 170px; }
.radii { gap: 4px; margin: 4px 0; padding-left: 3px; color: #ccc; }
.radii input { width: 68px; padding-left: 4px; }
.radii svg:first-child { margin-right: 3px; }
.radii svg:last-child { margin-left: 4px; }
.tr { transform: scaleX(-1); }
.bl { transform: scaleY(-1); }
.br { transform: scale(-1); }
.linkrow { padding-left: 81px; }
.linkbtn { width: 26px; height: 27px; background: #383838; border: 1px solid #5e5e5e; border-radius: 3px; color: #ccc; }
.ops { margin-top: 10px; }
.ops button { width: 33px; height: 24px; background: #454545; border: 1px solid #666; }
.ops .on { background: #383838; }

.layers { flex: 1; margin: 0; display: flex; flex-direction: column; min-height: 0; }
.lrow { display: flex; align-items: center; height: 29px; padding: 0 45px 0 4px; border-bottom: 1px solid #454545; color: #8a8a8a; flex: none; }
.filter { height: 34px; gap: 10px; color: #aaa; padding-top: 3px; }
.ldrop { height: 23px; border: 1px solid #666; border-radius: 3px; gap: 5px; justify-content: flex-start; padding: 0 4px 0 8px; color: #8a8a8a; }
.ldrop .end { margin-left: auto; color: #6e6e6e; }
.kind { width: 86px; margin-right: 8px; }
.mode { width: 117px; }
.toggle { width: 9px; height: 18px; border-radius: 5px; background: radial-gradient(circle at 50% 5px, #aaa 4px, #464646 5px); margin-left: 5px; }
.push { margin-left: auto; margin-right: 4px; }
.off { width: 55px; border-radius: 2px; }
.off input { color: #777; }
.off button { background: #535353; color: #6e6e6e; }
.locks { gap: 8px; padding: 0 45px 4px 5px; border-bottom: 0; color: #999; height: 31px; }
.locks span:first-child { margin-right: 4px; }
.locks .push { margin-right: -4px; }
.layerarea { flex: 1; display: flex; min-height: 0; background: #4f4f4f; }
.layerlist { flex: 1; }
.layer { display: flex; align-items: center; background: #535353; }
.eyecol { width: 30px; height: 29px; display: grid; place-items: center; border-right: 1px solid #454545; }
.layersel { flex: 1; display: flex; align-items: center; height: 29px; background: #6b6b6b; padding: 0 4px 0 2px; }
.lname { margin-left: 8px; }
.fx { font: italic 14px/14px "Noto Sans", sans-serif; }
.layersel .fx { margin-left: auto; }
.caret { transform: scaleY(-1); }
.effects { background: #535353; padding: 0 0 2px 50px; box-shadow: inset 30px 0 0 #535353, inset 31px 0 0 #454545; }
.eff { display: flex; align-items: center; height: 17px; gap: 6px; }
.eff.sub { padding-left: 17px; height: 19px; }
.lfoot { display: flex; align-items: center; justify-content: flex-end; gap: 13px; height: 26px; border-top: 1px solid #383838; padding-right: 26px; color: #a8a8a8; flex: none; }
.lfoot button { width: 14px; }
.edge { height: 2px; background: #262424; flex: none; }
.edge i { width: 160px; height: 2px; margin: 0 auto; background: #686868; }

/* layer style dialog */
.dialog { position: absolute; left: 629px; top: 270px; width: 794px; background: #535353; box-shadow: 0 3px 12px rgba(0, 0, 0, .45); color: #e0e0e0; }
.dtitle { height: 30px; background: #fff; color: #000; display: flex; align-items: center; justify-content: space-between; padding: 0 10px 2px 8px; }
.dtitle h1 { margin: 0; font: inherit; }
.dbody { display: grid; grid-template-columns: 229px 383px 129px; column-gap: 16px; padding: 10px 10px 11px 11px; }
.styles { margin-top: 2px; height: 481px; border: 1px solid #424242; padding-top: 1px; display: flex; flex-direction: column; }
.stylescroll { display: flex; height: 450px; padding-right: 1px; }
.stylelist { flex: 1; border-top: 1px solid #3f3f3f; }
.st { height: 26px; border-bottom: 1px solid #424242; display: flex; align-items: center; justify-content: space-between; padding: 0 4px 0 5px; color: #f0f0f0; }
.st.head { padding-left: 7px; color: #d5d5d5; }
.st.indent { padding-left: 15px; }
.st.sel { background: #6b6b6b; }
.st label { display: flex; align-items: center; gap: 5px; }
.plus { width: 14px; height: 14px; border: 1px solid #e6e6e6; background: linear-gradient(#e6e6e6, #e6e6e6) center / 8px 2px no-repeat, linear-gradient(#e6e6e6, #e6e6e6) center / 2px 8px no-repeat; }
.stylefoot { flex: 1; display: flex; align-items: center; gap: 14px; padding: 2px 8px 0; }
.stylefoot .end { margin-left: auto; }

input[type="checkbox"] { appearance: none; width: 12px; height: 12px; border: 1px solid #858585; border-radius: 3px; flex: none; display: grid; place-items: center; }
input[type="checkbox"]:checked { background: #d6d6d6; border-color: #d6d6d6; }
input[type="checkbox"]:checked::before { content: ""; width: 4px; height: 7px; margin-top: -2px; border: solid #333; border-width: 0 2px 2px 0; transform: rotate(45deg); }

fieldset { margin: 0; min-width: 0; border: 1px solid #424242; padding: 0 9px; }
legend { padding: 0 6px; height: 14px; line-height: 14px; color: #f0f0f0; }
.main > legend { margin-left: 5px; }
.main > legend + fieldset { margin-top: 5px; }
.inner { padding: 0 0 6px; }
.inner legend { margin-left: 13px; }
.structure { padding-top: 9px; }
.quality { margin-top: 5px; padding-top: 1px; }
.row { display: flex; align-items: center; height: 26px; }
.row.first { height: 27px; padding-bottom: 1px; }
.row > label:first-child { width: 92px; padding-right: 6px; text-align: right; flex: none; color: #cdcdcd; }
.row > span { margin-left: 4px; color: #cdcdcd; }
.row .selwrap { position: relative; margin: 3px 3px 0 0; width: 128px; }
.selwrap select { appearance: none; display: block; width: 100%; height: 23px; border: 1px solid #666; border-radius: 3px; background: #454545; padding: 0 8px; color: #f0f0f0; }
.selwrap svg { position: absolute; right: 3px; top: 7px; pointer-events: none; }
.colorchip { width: 36px; height: 25px; background: #fff; border: 1px solid #333; }
.row input[type="text"] { width: 41px; height: 21px; border: 1px solid #666; background: #454545; padding: 0 2px; color: #e0e0e0; }
.row.angle { height: 40px; }
.angle input[type="text"] { margin-left: 4px; }
.check { display: flex; align-items: center; gap: 6px; margin-left: 12px; color: #f0f0f0; }
.contour { height: 46px; padding-top: 8px; }
.curve { border: 1px solid #666; background: #454545; }
.curve span { height: 34px; padding: 0 1px; border-left: 1px solid #666; display: grid; place-items: center; }
input[type="range"] { appearance: none; width: 107px; height: 14px; margin: 0 5px 0 0; background: linear-gradient(#757575, #757575) 6px 2px / 95px 3px no-repeat; }
input[type="range"]::-webkit-slider-thumb { appearance: none; width: 12px; height: 11px; margin-top: 5px; background: url("data:image/svg+xml,%3Csvg xmlns='http://www.w3.org/2000/svg' width='12' height='11'%3E%3Cpath d='M6 .7L11.400 7v2.500q0 1-1 1H1.600q-1 0-1-1V7z' fill='%23f2f2f2' stroke='%23333' stroke-width='.8'/%3E%3C/svg%3E"); }
.defaults { display: flex; justify-content: center; gap: 11px; margin-top: 6px; padding-right: 2px; }
.defaults button { width: 98px; height: 24px; border: 1px solid #626262; border-radius: 3px; background: #454545; color: #f0f0f0; }

.actions { display: flex; flex-direction: column; gap: 9px; padding-top: 5px; }
.pill { height: 25px; border: 1px solid #7a7a7a; border-radius: 13px; color: #f0f0f0; }
.pill.ok { background: #e1e1e1; color: #222; border-color: #4d6fb0; }
.preview { display: flex; gap: 9px; align-items: center; height: 18px; padding-left: 23px; color: #f0f0f0; }
.thumb { height: 130px; background: #2b2b2b; border: 1px solid #454545; display: grid; place-items: center; }
.thumb i { width: 64px; height: 64px; background: #323232; border: 2px solid #777; }
.halo { position: absolute; left: 643px; top: 28px; width: 58px; height: 58px; border-radius: 50%; background: radial-gradient(circle, #ffcb00 0 4px, #fff000 13px); mix-blend-mode: multiply; pointer-events: none; }
.cursor { position: absolute; left: 670px; top: 57px; pointer-events: none; }
```
